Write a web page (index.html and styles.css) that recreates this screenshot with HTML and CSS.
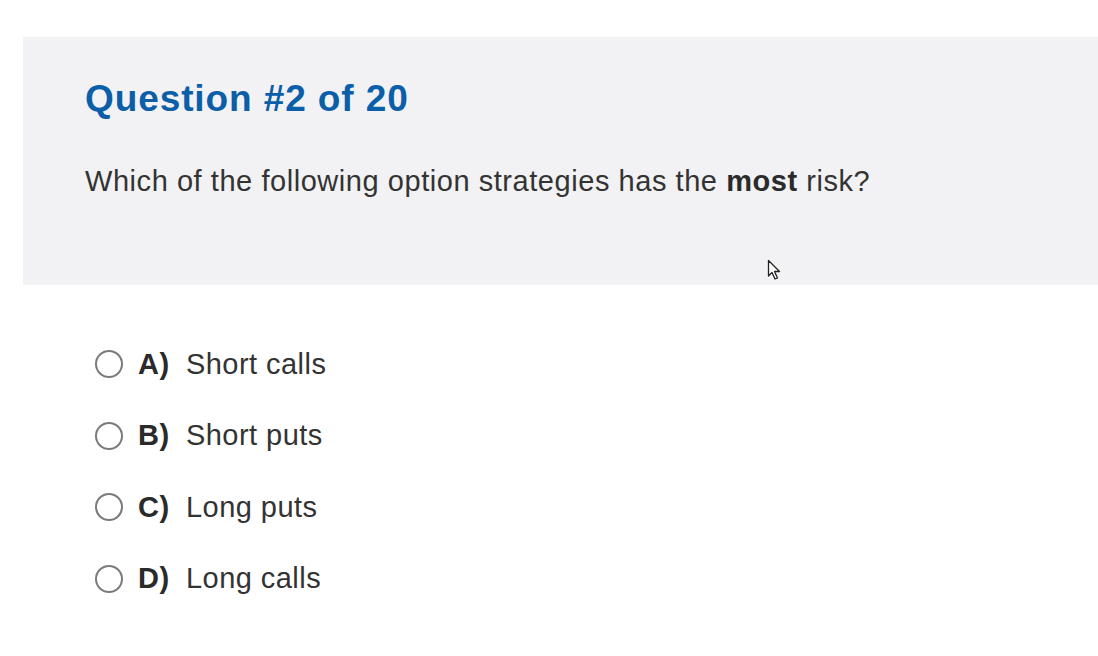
FILE: index.html
```html
<!DOCTYPE html>
<html>
<head>
<meta charset="utf-8">
<link rel="stylesheet" href="styles.css">
</head>
<body>
<div class="page">
  <section class="question">
    <h1 class="title">Question #2 of 20</h1>
    <p class="prompt">Which of the following option strategies has the <b>most</b> risk?</p>
    <svg class="cursor" width="16" height="22" viewBox="0 0 16 22"><path d="M1.5 1.5 L1.5 17 L5 13.5 L8 20 L10.5 19 L7.5 12.5 L12.5 12.5 Z" fill="#fff" stroke="#222" stroke-width="1.3" stroke-linejoin="round"/></svg>
  </section>
  <ul class="options">
    <li class="option"><span class="radio"></span><span class="letter">A)</span><span class="text">Short calls</span></li>
    <li class="option"><span class="radio"></span><span class="letter">B)</span><span class="text">Short puts</span></li>
    <li class="option"><span class="radio"></span><span class="letter">C)</span><span class="text">Long puts</span></li>
    <li class="option"><span class="radio"></span><span class="letter">D)</span><span class="text">Long calls</span></li>
  </ul>
</div>
</body>
</html>
```
FILE: styles.css
```css
html, body {
  margin: 0;
  padding: 0;
  background: #ffffff;
}
body {
  font-family: "Liberation Sans", Arial, sans-serif;
  color: #333333;
  width: 1098px;
  height: 656px;
  overflow: hidden;
}
.page {
  padding-top: 37px;
  padding-left: 23px;
}
.question {
  position: relative;
  background: #f2f2f4;
  height: 248px;
  box-sizing: border-box;
  padding: 0 0 0 62px;
  display: flex;
  flex-direction: column;
}
.title {
  margin: 41px 0 0 0;
  font-size: 37px;
  line-height: 42px;
  font-weight: bold;
  color: #0b5ea8;
  letter-spacing: 0.9px;
}
.prompt {
  margin: 44px 0 0 0;
  font-size: 29px;
  line-height: 34px;
  color: #333333;
  letter-spacing: 0.55px;
}
.prompt b {
  font-weight: bold;
  color: #2a2a2a;
}
.cursor {
  position: absolute;
  left: 744px;
  top: 222px;
}
.options {
  list-style: none;
  margin: 0;
  padding: 63px 0 0 72px;
  display: flex;
  flex-direction: column;
  gap: 39.5px;
}
.option {
  display: flex;
  align-items: center;
  height: 32px;
  font-size: 29px;
  letter-spacing: 0.45px;
}
.radio {
  width: 24px;
  height: 24px;
  border: 2px solid #7a7a7a;
  border-radius: 50%;
  background: #fff;
  flex: none;
}
.letter {
  font-weight: bold;
  margin-left: 15px;
  width: 48px;
  color: #2a2a2a;
}
.text {
  color: #333333;
}
```
